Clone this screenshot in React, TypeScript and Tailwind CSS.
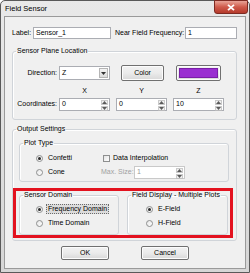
import type { ReactNode } from "react";

const font = { fontFamily: '"Liberation Sans", Arial, sans-serif' };

function TextBox({ value, className = "" }: { value: string; className?: string }) {
  return (
    <div className={`flex h-[12px] items-center border border-[#abadb3] bg-white pl-[2px] text-[7px] text-black ${className}`}>
      {value}
    </div>
  );
}

function Arrow({ dir }: { dir: "up" | "down" }) {
  return (
    <svg width="5" height="3" viewBox="0 0 5 3">
      {dir === "up" ? <path d="M0 3 L2.5 0 L5 3 Z" fill="#333" /> : <path d="M0 0 L2.5 3 L5 0 Z" fill="#333" />}
    </svg>
  );
}

function Spin({ value, disabled = false, className = "" }: { value: string; disabled?: boolean; className?: string }) {
  return (
    <div
      className={`flex h-[13px] items-stretch border bg-white ${disabled ? "border-[#c9c9c9] text-[#9a9a9a]" : "border-[#abadb3] text-black"} ${className}`}
    >
      <div className="flex flex-1 items-center pl-[2px] text-[7px]">{value}</div>
      <div className="flex w-[9px] flex-col gap-px p-px">
        <div className="flex flex-1 items-center justify-center border border-[#bdbdbd] bg-[#eeeeee] opacity-80">
          <Arrow dir="up" />
        </div>
        <div className="flex flex-1 items-center justify-center border border-[#bdbdbd] bg-[#eeeeee] opacity-80">
          <Arrow dir="down" />
        </div>
      </div>
    </div>
  );
}

function Button({ children, className = "" }: { children: ReactNode; className?: string }) {
  return (
    <div
      className={`flex items-center justify-center rounded-[2px] border border-[#707070] bg-gradient-to-b from-[#f2f2f2] via-[#ebebeb] to-[#d8d8d8] text-[7px] text-black shadow-[inset_0_0_0_1px_#fcfcfc] ${className}`}
    >
      {children}
    </div>
  );
}

function Radio({ label, checked = false, focus = false }: { label: string; checked?: boolean; focus?: boolean }) {
  return (
    <div className="flex h-[10px] items-center">
      <span className="flex h-[7px] w-[7px] items-center justify-center rounded-full border border-[#8e8f8f] bg-gradient-to-br from-[#e6e6e6] to-white">
        {checked && <span className="h-[3px] w-[3px] rounded-full bg-[#2b2b2b]" />}
      </span>
      <span
        className={`ml-[3px] px-px text-[7px] leading-[8px] text-black ${focus ? "border border-dotted border-[#6b6b6b] bg-[#dcdcdc]" : "border border-transparent"}`}
      >
        {label}
      </span>
    </div>
  );
}

function Group({ title, className = "", children }: { title: string; className?: string; children: ReactNode }) {
  return (
    <fieldset className={`rounded-[3px] border border-[#d0d4d9] shadow-[inset_1px_1px_0_#ffffff] ${className}`}>
      <legend className="ml-[3px] px-px text-[7px] leading-[8px] text-black">{title}</legend>
      {children}
    </fieldset>
  );
}

export default function App() {
  return (
    <div className="h-[273px] w-[250px] overflow-hidden bg-white" style={font}>
      <div className="flex h-full flex-col rounded-t-[5px] border border-[#595959] bg-gradient-to-b from-[#e9e9e9] to-[#d6d6d6]">
        {/* Title bar */}
        <div className="flex h-[15px] items-start justify-between">
          <span className="mt-[3px] ml-[4px] text-[7.5px] leading-[9px] text-black">Field Sensor</span>
          <div className="-mt-px mr-[1px] flex h-[14px] w-[34px] items-center justify-center rounded-b-[3px] border border-[#7d2a22] bg-gradient-to-b from-[#e8a397] via-[#cf5a4b] to-[#b43a2b]">
            <svg width="8" height="7" viewBox="0 0 8 7">
              <path d="M1 0.8 L7 6.2 M7 0.8 L1 6.2" stroke="#ffffff" strokeWidth="1.8" />
            </svg>
          </div>
        </div>

        {/* Client area */}
        <div className="mx-[3px] mb-[3px] flex flex-1 flex-col border border-[#9a9a9a] bg-[#f0f0f0] pt-[10px] pl-[7px]">
          <div className="flex h-[12px] items-center text-[7px] text-black">
            <span className="w-[21px]">Label:</span>
            <TextBox value="Sensor_1" className="w-[78px]" />
            <span className="ml-[4px] w-[70px]">Near Field Frequency:</span>
            <TextBox value="1" className="w-[52px]" />
          </div>

          <Group title="Sensor Plane Location" className="mt-[8px] w-[225px] pb-[8px]">
            <div className="mt-[10px] flex h-[16px] items-center text-[7px] text-black">
              <span className="w-[44px] text-right">Direction:</span>
              <div className="ml-[2px] flex h-[14px] w-[51px] items-center justify-between border border-[#abadb3] bg-white pl-[2px] pr-px">
                <span>Z</span>
                <span className="flex h-[10px] w-[9px] items-center justify-center border border-[#b5b5b5] bg-gradient-to-b from-[#f4f4f4] to-[#dcdcdc]">
                  <Arrow dir="down" />
                </span>
              </div>
              <Button className="ml-[11px] h-[16px] w-[43px]">Color</Button>
              <Button className="ml-[12px] h-[16px] w-[45px] p-[2px]">
                <span className="h-full w-full border border-[#7a1fa8] bg-[#9a2fd1]" />
              </Button>
            </div>
            <div className="mt-[6px] ml-[46px] flex h-[8px] gap-[6px] text-[7px] leading-[8px] text-black">
              <span className="w-[51px] text-center">X</span>
              <span className="w-[51px] text-center">Y</span>
              <span className="w-[51px] text-center">Z</span>
            </div>
            <div className="mt-[3px] flex h-[13px] items-center text-[7px] text-black">
              <span className="w-[44px] text-right">Coordinates:</span>
              <div className="ml-[2px] flex gap-[6px]">
                <Spin value="0" className="w-[51px]" />
                <Spin value="0" className="w-[51px]" />
                <Spin value="10" className="w-[51px]" />
              </div>
            </div>
          </Group>

          <Group title="Output Settings" className="mt-[5px] w-[225px] pb-[2px]">
            <Group title="Plot Type" className="mt-[6px] ml-[6px] w-[210px] pb-[3px]">
              <div className="mt-[6px] flex h-[10px] items-center pl-[16px]">
                <div className="w-[65px]">
                  <Radio label="Confetti" checked />
                </div>
                <div className="ml-[2px] flex items-center text-[7px] text-black">
                  <span className="h-[7px] w-[7px] border border-[#8e8f8f] bg-gradient-to-br from-[#e3e3e3] to-white" />
                  <span className="ml-[3px]">Data Interpolation</span>
                </div>
              </div>
              <div className="mt-[3px] flex h-[12px] items-center pl-[16px]">
                <div className="w-[65px]">
                  <Radio label="Cone" />
                </div>
                <span className="w-[33px] text-[7px] text-[#a0a0a0]">Max. Size:</span>
                <Spin value="1" disabled className="h-[12px] w-[51px]" />
              </div>
            </Group>

            <div className="mt-[6px] flex w-[220px] border-[3px] border-[#e3121f] pl-[3px]">
              <Group title="Sensor Domain" className="w-[100px] pb-[6px]">
                <div className="mt-[5px] pl-[16px]">
                  <Radio label="Frequency Domain" checked focus />
                </div>
                <div className="mt-[4px] pl-[16px]">
                  <Radio label="Time Domain" />
                </div>
              </Group>
              <Group title="Field Display - Multiple Plots" className="ml-[8px] w-[101px] pb-[6px]">
                <div className="mt-[5px] pl-[18px]">
                  <Radio label="E-Field" checked />
                </div>
                <div className="mt-[4px] pl-[18px]">
                  <Radio label="H-Field" />
                </div>
              </Group>
            </div>
          </Group>

          <div className="mt-[5px] flex justify-center gap-[32px] pr-[7px]">
            <Button className="h-[14px] w-[48px]">OK</Button>
            <Button className="h-[14px] w-[48px]">Cancel</Button>
          </div>
        </div>
      </div>
    </div>
  );
}
